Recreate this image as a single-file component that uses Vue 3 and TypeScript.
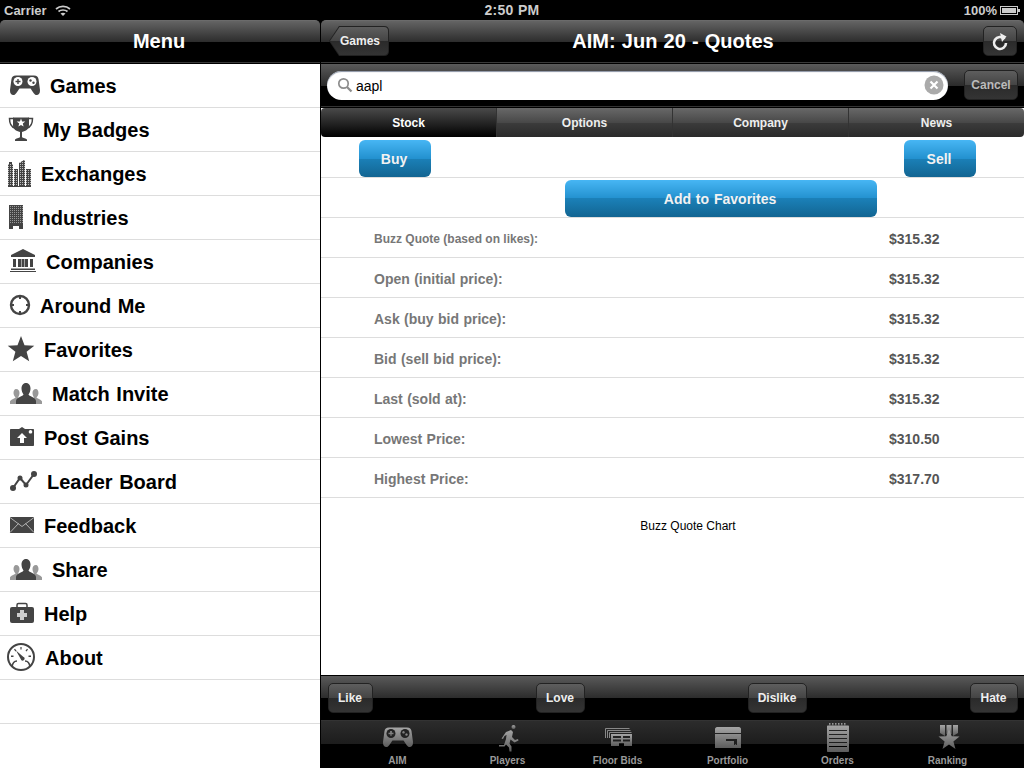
<script setup lang="ts">
function star(cx: number, cy: number, r: number) {
  const pts: string[] = []
  for (let i = 0; i < 10; i++) {
    const rad = i % 2 === 0 ? r : r * 0.42
    const a = (Math.PI / 5) * i - Math.PI / 2
    pts.push((cx + rad * Math.cos(a)).toFixed(1) + ',' + (cy + rad * Math.sin(a)).toFixed(1))
  }
  return pts.join(' ')
}

const people = `
  <path fill="#999" d="M16 17c2.500 0 3.500 2 3.500 4s-1 3.500-1.500 4.500l3 2-3 4.500H10v-2.500c0-1.500 5-3 5.500-4-1-1-2-3-2-4.500 0-2 1-4 2.500-4zM36 17c-2.500 0-3.500 2-3.500 4s1 3.500 1.500 4.500l-3 2 3 4.500h8v-2.500c0-1.500-5-3-5.500-4 1-1 2-3 2-4.500 0-2-1-4-2.500-4z"/>
  <path fill="#444" d="M26 11c3 0 4.500 2.500 4.500 5.500 0 2.500-1 4.500-2 6 0 1.500 7.500 3 7.500 6.500v3H16v-3c0-3.500 7.500-5 7.500-6.500-1-1.500-2-3.500-2-6 0-3 1.500-5.500 4.500-5.500z"/>`

const gamepad = `
  <path d="M16 11.500c-3 0-4 1.500-4.500 3.500L10 26c-.3 4 2 5.500 4 5 2-.5 4-4.500 5.500-6.500h11c1.500 2 3.500 6 5.500 6.500 2 .5 4.300-1 4-5l-1.500-11c-.5-2-1.500-3.500-4.500-3.500z"/>
  <circle cx="18" cy="17.500" r="4.500" fill="#fff"/><circle cx="32" cy="17.500" r="4.500" fill="#fff"/>
  <path d="M15.500 16.800h5v1.400h-5zM17.300 15h1.400v5h-1.400z"/>
  <circle cx="30.500" cy="16.500" r="1.200"/><circle cx="33.500" cy="18.800" r="1.200"/>`

const menuItems = [
  { label: 'Games', w: 50, icon: `<g fill="#444">${gamepad}</g>` },
  {
    label: 'My Badges',
    w: 43,
    icon: `<path fill="none" stroke="#444" stroke-width="1.500" d="M14 10.500H9.500c0 5 1.500 8.500 5.500 9.500M28 10.500h4.500c0 5-1.500 8.500-5.500 9.500"/>
      <path fill="#444" d="M13 9.500h16V17c0 4-3 6-7 7v5c0 1 3 1 5 2.500V33H15v-1.500c2-1.500 5-1.500 5-2.500v-5c-4-1-7-3-7-7z"/>
      <polygon fill="#fff" points="${star(21, 15, 4.500)}"/>`,
  },
  {
    label: 'Exchanges',
    w: 41,
    icon: `<defs><pattern id="win-a" width="2" height="2" patternUnits="userSpaceOnUse"><rect width="2" height="2" fill="#444"/><rect width="1" height="1" fill="#bbb"/></pattern></defs>
      <path fill="url(#win-a)" d="M8 12h5v23H8zM14 17h4v18h-4zM19 11l5-3h1v27h-6zM26 17h5v18h-5z"/>
      <path fill="#444" d="M9 10h3v2H9zM8 34h23v1H8z"/>`,
  },
  {
    label: 'Industries',
    w: 33,
    icon: `<defs><pattern id="win-b" width="2" height="2" patternUnits="userSpaceOnUse"><rect width="2" height="2" fill="#444"/><rect width="1" height="1" fill="#999"/></pattern></defs>
      <rect x="9" y="9" width="14" height="18" fill="url(#win-b)"/>
      <path fill="#444" d="M9 27h14v6h-4v-3h-6v3H9z"/>`,
  },
  {
    label: 'Companies',
    w: 46,
    icon: `<path fill="#444" d="M23 9l12 6v2H11v-2zM13 19h3v8h-3zM18 19h3v8h-3zM25 19h3v8h-3zM30 19h3v8h-3zM21.500 19h3v8h-3zM11 28.500h24V30H11zM10 31h26v1H10z"/>`,
  },
  {
    label: 'Around Me',
    w: 40,
    icon: `<circle cx="20" cy="21" r="9" fill="none" stroke="#444" stroke-width="2.400"/>
      <path fill="#444" d="M19 11h2v4h-2zM19 27h2v4h-2zM10 20h4v2h-4zM26 20h4v2h-4z"/>`,
  },
  { label: 'Favorites', w: 44, icon: `<polygon fill="#444" points="${star(21, 22, 14)}"/>` },
  { label: 'Match Invite', w: 52, icon: people },
  {
    label: 'Post Gains',
    w: 44,
    icon: `<path fill="#444" d="M11 13h8l3-2 3 2h8c.6 0 1 .4 1 1v15c0 .6-.4 1-1 1H11c-.6 0-1-.4-1-1V14c0-.6.4-1 1-1z"/>
      <path fill="#fff" d="M22 17l5 5h-3v5h-4v-5h-3zM30.500 14a1.800 1.800 0 1 1-.01 0z"/>`,
  },
  {
    label: 'Leader Board',
    w: 47,
    icon: `<path fill="none" stroke="#444" stroke-width="2" d="M13 28l7-10 6 7 8-11"/>
      <circle cx="13" cy="28" r="3" fill="#444"/><circle cx="20" cy="18" r="2.500" fill="#444"/>
      <circle cx="26" cy="25" r="2.500" fill="#444"/><circle cx="34" cy="14" r="3" fill="#444"/>`,
  },
  {
    label: 'Feedback',
    w: 44,
    icon: `<rect x="10" y="13" width="24" height="16" fill="#444"/>
      <path fill="none" stroke="#ccc" stroke-width=".8" d="M10 13.500l12 9 12-9M10 28.500l8.500-9M34 28.500l-8.500-9"/>`,
  },
  { label: 'Share', w: 52, icon: people },
  {
    label: 'Help',
    w: 44,
    icon: `<path fill="none" stroke="#444" stroke-width="1.500" d="M17 16v-3c0-1 .6-1.500 1.500-1.500h7c.9 0 1.500.5 1.500 1.500v3"/>
      <rect x="10" y="15" width="24" height="16" rx="2" fill="#444"/>
      <path fill="#ccc" d="M20 18h4v3h3v4h-3v3h-4v-3h-3v-4h3z"/>`,
  },
  {
    label: 'About',
    w: 45,
    icon: `<circle cx="21" cy="21" r="13" fill="none" stroke="#444" stroke-width="2"/>
      <path fill="#444" d="M11 19.500h2.500v1.500H11zM28.500 19.500H31v1.500h-2.500zM20.400 11h1.200v2.500h-1.200zM14 13.500l1-.8 1.500 2-1 .8zM28 13.500l-1-.8-1.500 2 1 .8z"/>
      <path fill="#444" d="M16 14.500l7.200 6.200a2 2 0 1 1-2.500 2.300z"/>
      <path fill="none" stroke="#444" stroke-width="1.600" d="M12 31c.5-4 2.500-6 5-6M30 31c-.5-4-2.500-6-5-6"/>`,
  },
]

const tabs = [
  { label: 'AIM', icon: `<g transform="translate(-3 -6)">${gamepad.replaceAll('#fff', '#222')}</g>` },
  {
    label: 'Players',
    icon: `<circle cx="27.500" cy="5" r="2"/>
      <path d="M20 10l5-2 2 2-1 5 3 3 3-1 .5 1.500-4 2-4-3-1 4 2 3v5h-2l-.5-4-3-3-1.500 2H13v-1.500h5l2-6 .5-4-2 1-1.500 3-1.500-.5z"/>`,
  },
  {
    label: 'Floor Bids',
    icon: `<path fill="none" stroke="#888" d="M9.500 16V6.500h24M11.500 16V8.500h23M13.500 16v-5.500h22"/>
      <path d="M15 12h21v12h-8v-3h-5v3h-8zM17 14v2h8v-2zM27 14v2h7v-2zM17 17.500v2h8v-2zM27 17.500v2h7v-2z" fill-rule="evenodd"/>`,
  },
  {
    label: 'Portfolio',
    icon: `<path d="M11 5h22c1 0 2 1 2 2v4H9V7c0-1 1-2 2-2zM9 12h26v14H9zm11 5v2h8v4l1.500-1 1.500 1v-6z" fill-rule="evenodd"/>`,
  },
  {
    label: 'Orders',
    icon: `<path d="M13 1h1.500v2.500H13zM16 1h1.500v2.500H16zM19 1h1.500v2.500H19zM22 1h1.500v2.500H22zM25 1h1.500v2.500H25zM28 1h1.500v2.500H28z"/>
      <path d="M12 3.500h20c.6 0 1 .4 1 1V29c0 .6-.4 1-1 1H12c-.6 0-1-.4-1-1V4.500c0-.6.4-1 1-1zM13 8v1h18V8zm0 4v1h18v-1zm0 4v1h18v-1zm0 4v1h18v-1zm0 4v1h18v-1z" fill-rule="evenodd"/>`,
  },
  {
    label: 'Ranking',
    icon: `<path d="M14 3h5v11l-5-3zM20.500 3h5v9h-5zM27 3h5v8l-5 3z"/>
      <polygon points="${star(23, 18, 11)}"/>`,
  },
]

const quotes = [
  { label: 'Buzz Quote (based on likes):', value: '$315.32', small: true },
  { label: 'Open (initial price):', value: '$315.32' },
  { label: 'Ask (buy bid price):', value: '$315.32' },
  { label: 'Bid (sell bid price):', value: '$315.32' },
  { label: 'Last (sold at):', value: '$315.32' },
  { label: 'Lowest Price:', value: '$310.50' },
  { label: 'Highest Price:', value: '$317.70' },
]

const segments = ['Stock', 'Options', 'Company', 'News']
const activeSegment = 'Stock'
const moods = [
  { label: 'Like', w: 45 },
  { label: 'Love', w: 49 },
  { label: 'Dislike', w: 59 },
  { label: 'Hate', w: 48 },
]
</script>

<template>
  <div class="screen">
    <header class="status">
      <div class="status-left">
        <span>Carrier</span>
        <svg width="16" height="11" viewBox="0 0 16 11" fill="none" stroke="#ccc" stroke-width="1.700">
          <path d="M1 4c4-3.500 10-3.500 14 0M3.500 6.500c2.500-2 6.500-2 9 0" />
          <path fill="#ccc" stroke="none" d="M8 11L5.500 8.500c1.500-1 3.500-1 5 0z" />
        </svg>
      </div>
      <div class="status-time">2:50 PM</div>
      <div class="status-right">
        <span>100%</span>
        <svg width="20" height="9" viewBox="0 0 20 9">
          <rect x=".5" y=".5" width="17" height="8" fill="none" stroke="#ccc" />
          <rect x="2" y="2" width="14" height="5" fill="#ccc" />
          <rect x="18" y="3" width="2" height="3" fill="#ccc" />
        </svg>
      </div>
    </header>

    <div class="panes">
      <aside class="sidebar">
        <div class="navbar">
          <h1 class="menu-title">Menu</h1>
        </div>
        <ul class="menu">
          <li v-for="item in menuItems" :key="item.label">
            <svg class="menu-icon" :width="item.w" height="44" :viewBox="`0 0 ${item.w} 44`" v-html="item.icon"></svg>
            <span>{{ item.label }}</span>
          </li>
          <li class="blank"></li>
        </ul>
      </aside>

      <main class="detail">
        <div class="navbar navbar-detail">
          <button class="back"><span>Games</span></button>
          <h1>AIM: Jun 20 - Quotes</h1>
          <button class="bar-btn refresh">
            <svg width="22" height="22" viewBox="0 0 22 22" fill="none">
              <path d="M15.500 9A6 6 0 1 0 17 13" stroke="#eee" stroke-width="2.600" />
              <path d="M11 3l6.500 3.500L13 12z" fill="#eee" />
            </svg>
          </button>
        </div>

        <div class="searchbar">
          <div class="search-field">
            <svg width="16" height="16" viewBox="0 0 16 16" fill="none" stroke="#8d8d8d">
              <circle cx="6.500" cy="6.500" r="4.700" stroke-width="1.700" />
              <path d="M10 10l4.500 4.500" stroke-width="2.300" />
            </svg>
            <span class="search-text">aapl</span>
            <svg class="clear" width="20" height="20" viewBox="0 0 20 20">
              <circle cx="10" cy="10" r="9.500" fill="#aaa" />
              <path d="M6.500 6.500l7 7M13.500 6.500l-7 7" stroke="#fff" stroke-width="2.200" />
            </svg>
          </div>
          <button class="bar-btn cancel">Cancel</button>
        </div>

        <div class="segments-wrap">
          <div class="segments">
            <div
              v-for="seg in segments"
              :key="seg"
              class="segment"
              :class="{ active: seg === activeSegment }"
            >
              {{ seg }}
            </div>
          </div>
        </div>

        <div class="content">
          <div class="action-row trade">
            <button class="blue-btn">Buy</button>
            <button class="blue-btn">Sell</button>
          </div>
          <div class="action-row favorite">
            <button class="blue-btn wide">Add to Favorites</button>
          </div>
          <div v-for="q in quotes" :key="q.label" class="quote-row">
            <span class="quote-label" :class="{ small: q.small }">{{ q.label }}</span>
            <span class="quote-value">{{ q.value }}</span>
          </div>
          <p class="chart-title">Buzz Quote Chart</p>
        </div>

        <div class="toolbar">
          <button v-for="m in moods" :key="m.label" class="bar-btn mood" :style="{ width: m.w + 'px' }">
            {{ m.label }}
          </button>
        </div>

        <nav class="tabbar">
          <div v-for="(t, i) in tabs" :key="t.label" class="tab">
            <svg width="44" height="32" viewBox="0 0 44 32">
              <defs>
                <linearGradient :id="`tab-fill-${i}`" x1="0" y1="0" x2="0" y2="1">
                  <stop offset="0" stop-color="#a5a5a5" />
                  <stop offset="1" stop-color="#5c5c5c" />
                </linearGradient>
              </defs>
              <g :fill="`url(#tab-fill-${i})`" v-html="t.icon"></g>
            </svg>
            <span>{{ t.label }}</span>
          </div>
        </nav>
      </main>
    </div>
  </div>
</template>

<style>
html,
body {
  margin: 0;
  background: #000;
}
</style>

<style scoped>
.screen {
  width: 1024px;
  height: 768px;
  display: flex;
  flex-direction: column;
  overflow: hidden;
  background: #000;
  font-family: 'Liberation Sans', Arial, sans-serif;
}

.status {
  height: 20px;
  flex: none;
  display: grid;
  grid-template-columns: 1fr auto 1fr;
  align-items: center;
  padding: 0 4px;
  color: #ccc;
  font-size: 13px;
  font-weight: bold;
}

.status-left {
  display: flex;
  align-items: center;
  gap: 8px;
}

.status-time {
  font-size: 14px;
  letter-spacing: 0.3px;
}

.status-right {
  display: flex;
  align-items: center;
  justify-content: flex-end;
  gap: 3px;
}

.panes {
  flex: 1;
  display: flex;
  min-height: 0;
}

.sidebar {
  width: 320px;
  flex: none;
  display: flex;
  flex-direction: column;
}

.detail {
  margin-left: 1px;
  flex: 1;
  min-width: 0;
  display: flex;
  flex-direction: column;
}

.navbar {
  height: 44px;
  flex: none;
  box-sizing: border-box;
  display: flex;
  align-items: center;
  justify-content: center;
  padding-bottom: 2px;
  border-radius: 5px 5px 0 0;
  border-top: 1px solid #6b6b6b;
  border-bottom: 1px solid #000;
  box-shadow: inset 0 -1px 0 #3a3a3a;
  background: linear-gradient(#646464 0, #2c2c2c 50%, #000 50%, #000 100%);
}

.navbar h1 {
  margin: 0;
  color: #fff;
  font-size: 20px;
  font-weight: bold;
  word-spacing: 0.6px;
}

.navbar .menu-title {
  margin-right: 2px;
}

.navbar-detail {
  display: grid;
  grid-template-columns: 1fr auto 1fr;
  padding: 0 7px 2px 8px;
}

.back {
  width: 60px;
  height: 30px;
  border: 0;
  padding: 0;
  background: #222;
  clip-path: path('M10 0H55Q60 0 60 5V25Q60 30 55 30H10L0 15Z');
}

.back span {
  display: flex;
  align-items: center;
  justify-content: center;
  height: 28px;
  width: 58px;
  margin: 1px;
  padding-left: 2px;
  box-sizing: border-box;
  color: #eee;
  font: bold 12px 'Liberation Sans', Arial, sans-serif;
  background: linear-gradient(#5e5e5e 0, #444 50%, #2a2a2a 50%, #343434 100%);
  clip-path: path('M9.500 0H54Q58 0 58 4V24Q58 28 54 28H9.500L0 14Z');
}

.bar-btn {
  box-sizing: border-box;
  border: 1px solid #222;
  border-radius: 5px;
  color: #eee;
  padding: 0;
  font: bold 12px 'Liberation Sans', Arial, sans-serif;
  background: linear-gradient(#5e5e5e 0, #444 50%, #2a2a2a 50%, #343434 100%);
}

.refresh {
  width: 34px;
  height: 30px;
  display: flex;
  align-items: center;
  justify-content: center;
  justify-self: end;
}

.menu {
  flex: 1;
  margin: 0;
  padding: 0;
  list-style: none;
  background: #fff;
}

.menu li {
  height: 44px;
  box-sizing: border-box;
  display: flex;
  align-items: center;
  border-bottom: 1px solid #ddd;
  color: #000;
  font-size: 20px;
  font-weight: bold;
  word-spacing: 1px;
}

.menu li span {
  padding-top: 2px;
}

.menu-icon {
  flex: none;
}

.menu .blank {
  border-bottom: 1px solid #ddd;
}

.searchbar {
  height: 44px;
  flex: none;
  box-sizing: border-box;
  display: flex;
  align-items: center;
  justify-content: space-between;
  padding: 0 6px 2px;
  border-top: 1px solid #5a5a5a;
  border-bottom: 1px solid #000;
  box-shadow: inset 0 -1px 0 #333;
  background: linear-gradient(#585858 0, #2a2a2a 50%, #000 50%, #000 100%);
}

.search-field {
  width: 621px;
  height: 29px;
  box-sizing: border-box;
  display: flex;
  align-items: center;
  padding: 0 4px 0 10px;
  border-radius: 15px;
  background: #fff;
  box-shadow: inset 0 1px 1px #8a93a3;
}

.search-text {
  flex: 1;
  margin-left: 3px;
  padding-top: 2px;
  color: #000;
  font-size: 14px;
}

.cancel {
  width: 54px;
  height: 30px;
  color: #bbb;
}

.segments-wrap {
  flex: none;
  background: #fff;
}

.segments {
  height: 29px;
  display: flex;
  border-radius: 4px;
  overflow: hidden;
}

.segment {
  flex: 1;
  display: flex;
  align-items: center;
  justify-content: center;
  color: #eee;
  font-size: 12px;
  font-weight: bold;
  border-right: 1px solid #333;
  background: linear-gradient(#686868 0, #484848 50%, #3c3c3c 50%, #2a2a2a 100%);
}

.segment:last-child {
  border-right: 0;
}

.segment.active {
  color: #fff;
  background: linear-gradient(#4a4a4a 0, #1e1e1e 60%, #000 100%);
}

.content {
  flex: 1;
  min-height: 0;
  background: #fff;
  border-bottom: 1px solid #000;
}

.action-row {
  box-sizing: border-box;
  display: flex;
  border-bottom: 1px solid #ddd;
}

.trade {
  height: 41px;
  justify-content: space-between;
  padding: 3px 48px 0 38px;
}

.favorite {
  height: 40px;
  padding: 2px 0 0 244px;
}

.blue-btn {
  width: 72px;
  height: 37px;
  border: 0;
  border-radius: 6px;
  padding: 0 2px 0 0;
  color: #f2f2f2;
  font: bold 14px 'Liberation Sans', Arial, sans-serif;
  word-spacing: 1px;
  background: linear-gradient(#47b6f4 0, #2391cf 50%, #1b80b8 50%, #126592 100%);
}

.blue-btn.wide {
  width: 312px;
}

.quote-row {
  height: 40px;
  box-sizing: border-box;
  display: flex;
  align-items: center;
  padding: 3px 0 0 53px;
  border-bottom: 1px solid #ddd;
}

.quote-label {
  width: 515px;
  color: #777;
  font-size: 14px;
  font-weight: bold;
  word-spacing: 0.5px;
}

.quote-label.small {
  font-size: 12px;
  word-spacing: 0;
}

.quote-value {
  color: #555;
  font-size: 14px;
  font-weight: bold;
}

.chart-title {
  margin: 21px 0 0;
  padding-left: 31px;
  text-align: center;
  color: #000;
  font-size: 12px;
}

.toolbar {
  height: 44px;
  flex: none;
  box-sizing: border-box;
  display: flex;
  align-items: center;
  justify-content: space-between;
  padding: 0 6px 0 7px;
  background: linear-gradient(#5a5a5a 0, #2c2c2c 50%, #000 50%, #000 100%);
}

.mood {
  height: 30px;
  padding-right: 1px;
}

.tabbar {
  height: 48px;
  flex: none;
  box-sizing: border-box;
  display: flex;
  justify-content: center;
  border-top: 1px solid #333;
  background: linear-gradient(#2c2c2c 0, #1c1c1c 50%, #000 50%, #000 100%);
}

.tab {
  width: 110px;
  display: flex;
  flex-direction: column;
  align-items: center;
  padding-top: 1px;
  color: #999;
  font-size: 10px;
  font-weight: bold;
}

.tab span {
  margin-top: 1px;
}
</style>
